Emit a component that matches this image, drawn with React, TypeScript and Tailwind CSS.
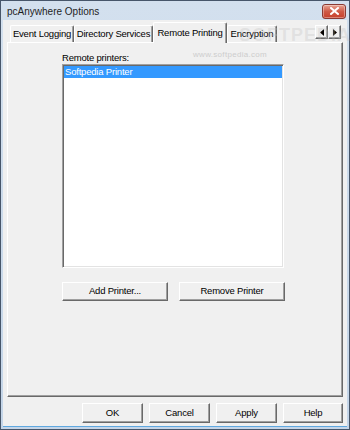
import React from 'react';

const raised =
  'border border-t-white border-l-white border-r-[#696969] border-b-[#696969] shadow-[inset_-1px_-1px_0_#a0a0a0]';

function Button({ label, className = '' }: { label: string; className?: string }) {
  return (
    <div className={`flex items-center justify-center bg-[#f0f0f0] text-black ${raised} ${className}`}>
      {label}
    </div>
  );
}

function Tab({ label, selected = false, width }: { label: string; selected?: boolean; width: string }) {
  if (selected) {
    return (
      <div
        className={`relative z-10 -mb-px flex h-[21px] items-start justify-center rounded-t-[2px] border-l border-t border-r border-l-white border-t-white border-r-[#696969] bg-[#f0f0f0] pt-[3px] shadow-[inset_-1px_0_0_#a0a0a0] ${width}`}
      >
        {label}
      </div>
    );
  }
  return (
    <div
      className={`flex h-[17px] items-start justify-center rounded-t-[2px] border-l border-t border-r border-l-white border-t-white border-r-[#696969] bg-[#f0f0f0] pt-[1px] shadow-[inset_-1px_0_0_#a0a0a0] ${width}`}
    >
      {label}
    </div>
  );
}

function ArrowButton({ dir }: { dir: 'left' | 'right' }) {
  return (
    <div className={`flex h-[14px] w-[13px] items-center justify-center bg-[#f0f0f0] ${raised}`}>
      <svg width="4" height="7" viewBox="0 0 4 7">
        {dir === 'left' ? <path d="M4 0 L0 3.5 L4 7 Z" fill="#000" /> : <path d="M0 0 L4 3.5 L0 7 Z" fill="#000" />}
      </svg>
    </div>
  );
}

export default function App() {
  return (
    <div className="flex h-[430px] w-[350px] flex-col border border-[#47566a] bg-[linear-gradient(#d3e0ee,#c4d5e8)] px-[2px] pb-[2px] font-['Liberation_Sans',Arial,sans-serif] text-[9.5px] tracking-[-0.2px] text-black">
      {/* Title bar */}
      <div className="flex h-[19px] shrink-0 items-center justify-between">
        <span className="pl-[4px] pt-[1px] text-[10px] tracking-normal text-[#1e1e1e]">pcAnywhere Options</span>
        <div className="mr-[1px] mt-[1px] flex h-[15px] w-[24px] items-center justify-center rounded-[3px] border border-[#8a3a33] bg-[linear-gradient(#e8a493,#cf5a47_50%,#c7402c)] shadow-[inset_0_0_0_1px_rgba(255,255,255,0.35)]">
          <svg width="9" height="8" viewBox="0 0 9 8">
            <path d="M1 1 L8 7 M8 1 L1 7" stroke="#fff" strokeWidth="2" strokeLinecap="square" />
          </svg>
        </div>
      </div>

      {/* Client area */}
      <div className="relative flex flex-1 flex-col border-b border-b-[#5fa8e0] bg-[#f0f0f0] px-[4px] pt-[3px]">
        {/* Watermarks lying over the dialog */}
        <span className="pointer-events-none absolute left-[236px] top-[2px] z-20 text-[18px] font-bold tracking-[1px] text-[rgba(190,190,190,0.3)]">
          SOFTPEDIA
        </span>
        <span className="pointer-events-none absolute left-[190px] top-[29px] z-20 text-[8px] tracking-[0.3px] text-[#cdcdcd]">
          www.softpedia.com
        </span>

        {/* Tab row */}
        <div className="relative flex h-[19px] shrink-0 items-end pl-[3px]">
          <Tab label="Event Logging" width="w-[64px]" />
          <Tab label="Directory Services" width="w-[79px]" />
          <Tab label="Remote Printing" selected width="w-[74px]" />
          <Tab label="Encryption" width="w-[50px]" />
          <div className="absolute right-[2px] top-[2px] flex">
            <ArrowButton dir="left" />
            <ArrowButton dir="right" />
          </div>
        </div>

        {/* Tab panel */}
        <div className="flex h-[355px] shrink-0 flex-col border border-t-white border-l-white border-r-[#696969] border-b-[#696969] pl-[54px] pt-[9px] shadow-[inset_-1px_-1px_0_#a0a0a0]">
          <div className="h-[12px] leading-[12px]">Remote printers:</div>
          <div className="h-[204px] w-[222px] border border-t-[#a0a0a0] border-l-[#a0a0a0] border-r-white border-b-white bg-white p-px shadow-[inset_1px_1px_0_#696969,inset_-1px_-1px_0_#e3e3e3]">
            <div className="flex h-[12px] items-center bg-[#3399ff] pl-[1px] text-white">Softpedia Printer</div>
          </div>
          <div className="mt-[14px] flex w-[223px] justify-between">
            <Button label="Add Printer..." className="h-[19px] w-[106px]" />
            <Button label="Remove Printer" className="h-[19px] w-[106px]" />
          </div>
        </div>

        {/* Bottom buttons */}
        <div className="mt-[6px] flex h-[20px] shrink-0 justify-end gap-[6px]">
          <Button label="OK" className="w-[61px]" />
          <Button label="Cancel" className="w-[61px]" />
          <Button label="Apply" className="w-[61px]" />
          <Button label="Help" className="w-[60px]" />
        </div>
      </div>
    </div>
  );
}
